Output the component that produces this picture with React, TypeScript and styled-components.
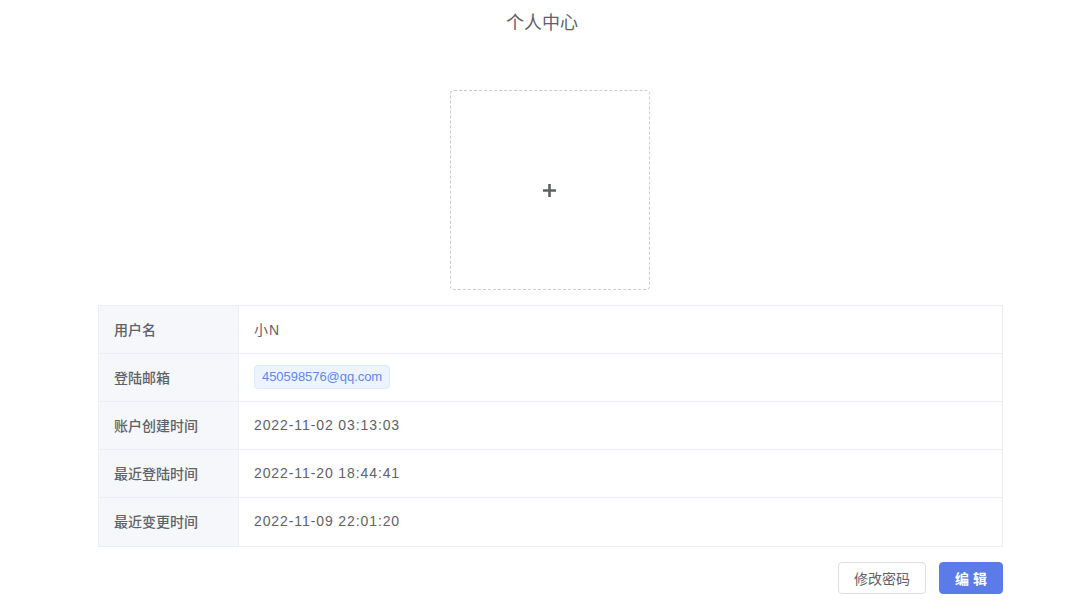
import React from "react";
import styled, { createGlobalStyle } from "styled-components";

const Global = createGlobalStyle`
  html, body { margin: 0; padding: 0; background: #fff; }
  body { font-family: "Liberation Sans", "Noto Sans CJK SC", sans-serif; color: #606266; }
`;

const Page = styled.div`
  padding: 0 69px 0 98px;
  display: flex;
  flex-direction: column;
`;

const Title = styled.h1`
  margin: 0;
  padding: 12px 17px 0 0;
  height: 24px;
  line-height: 22px;
  font-size: 18px;
  font-weight: 400;
  text-align: center;
  color: #606266;
`;

const UploadRow = styled.div`
  display: flex;
  justify-content: center;
  margin-top: 54px;
`;

const Uploader = styled.div`
  width: 198px;
  height: 198px;
  margin-left: -2px;
  border: 1px dashed #c8ccd4;
  border-radius: 4px;
  display: flex;
  align-items: center;
  justify-content: center;
  cursor: pointer;
`;

const Table = styled.div`
  margin-top: 15px;
  border: 1px solid #ebeef5;
  display: grid;
  grid-template-columns: 140px 1fr;
`;

const Label = styled.div<{ $last?: boolean }>`
  background: #f5f7fa;
  height: 48px;
  border-right: 1px solid #ebeef5;
  border-bottom: ${(p) => (p.$last ? "none" : "1px solid #ebeef5")};
  padding: 0 0 2px 15px;
  box-sizing: border-box;
  display: flex;
  align-items: center;
  font-size: 14px;
  font-weight: 500;
  color: #606266;
`;

const Value = styled.div<{ $last?: boolean }>`
  height: 48px;
  border-bottom: ${(p) => (p.$last ? "none" : "1px solid #ebeef5")};
  padding: 0 0 2px 15px;
  box-sizing: border-box;
  display: flex;
  align-items: center;
  font-size: 14px;
  color: #606266;
  letter-spacing: 0.9px;
`;

const Tag = styled.span`
  display: inline-flex;
  align-items: center;
  height: 22px;
  padding: 0 7px;
  background: #ecf5ff;
  border: 1px solid #d9ecff;
  border-radius: 4px;
  color: #6585ea;
  font-size: 13px;
  letter-spacing: -0.05px;
`;

const Actions = styled.div`
  display: flex;
  justify-content: flex-end;
  gap: 13px;
  margin-top: 15px;
`;

const Button = styled.button<{ $primary?: boolean }>`
  height: 32px;
  padding: 0 15px;
  font-family: "Liberation Sans", "Noto Sans CJK SC", sans-serif;
  font-size: 14px;
  font-weight: ${(p) => (p.$primary ? 700 : 400)};
  border-radius: 4px;
  border: 1px solid ${(p) => (p.$primary ? "#5b7ce8" : "#dcdfe6")};
  background: ${(p) => (p.$primary ? "#5b7ce8" : "#fff")};
  color: ${(p) => (p.$primary ? "#fff" : "#606266")};
  cursor: pointer;
`;

const rows: { label: string; value: React.ReactNode }[] = [
  { label: "用户名", value: "小N" },
  { label: "登陆邮箱", value: <Tag>450598576@qq.com</Tag> },
  { label: "账户创建时间", value: "2022-11-02 03:13:03" },
  { label: "最近登陆时间", value: "2022-11-20 18:44:41" },
  { label: "最近变更时间", value: "2022-11-09 22:01:20" },
];

export default function App() {
  return (
    <>
      <Global />
      <Page>
        <Title>个人中心</Title>
        <UploadRow>
          <Uploader>
            <svg width="15" height="15" viewBox="0 0 15 15">
              <path d="M7.5 1v13M1 7.5h13" stroke="#5f6166" strokeWidth="2.6" />
            </svg>
          </Uploader>
        </UploadRow>
        <Table>
          {rows.map((r, i) => (
            <React.Fragment key={r.label}>
              <Label $last={i === rows.length - 1}>{r.label}</Label>
              <Value $last={i === rows.length - 1}>{r.value}</Value>
            </React.Fragment>
          ))}
        </Table>
        <Actions>
          <Button>修改密码</Button>
          <Button $primary>编 辑</Button>
        </Actions>
      </Page>
    </>
  );
}
